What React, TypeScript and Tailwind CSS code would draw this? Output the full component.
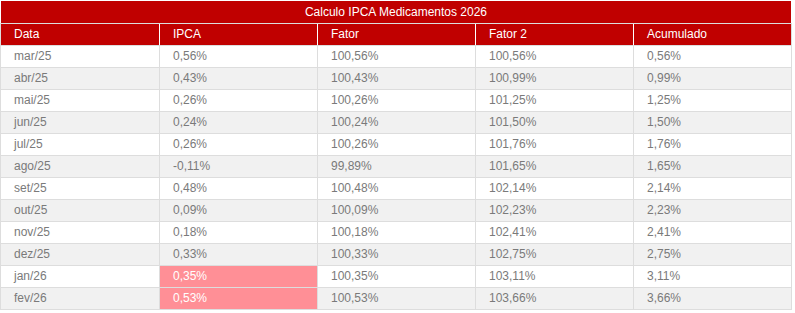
import React from 'react';

type Row = {
  data: string;
  ipca: string;
  fator: string;
  fator2: string;
  acumulado: string;
  highlight?: boolean;
};

const rows: Row[] = [
  { data: 'mar/25', ipca: '0,56%', fator: '100,56%', fator2: '100,56%', acumulado: '0,56%' },
  { data: 'abr/25', ipca: '0,43%', fator: '100,43%', fator2: '100,99%', acumulado: '0,99%' },
  { data: 'mai/25', ipca: '0,26%', fator: '100,26%', fator2: '101,25%', acumulado: '1,25%' },
  { data: 'jun/25', ipca: '0,24%', fator: '100,24%', fator2: '101,50%', acumulado: '1,50%' },
  { data: 'jul/25', ipca: '0,26%', fator: '100,26%', fator2: '101,76%', acumulado: '1,76%' },
  { data: 'ago/25', ipca: '-0,11%', fator: '99,89%', fator2: '101,65%', acumulado: '1,65%' },
  { data: 'set/25', ipca: '0,48%', fator: '100,48%', fator2: '102,14%', acumulado: '2,14%' },
  { data: 'out/25', ipca: '0,09%', fator: '100,09%', fator2: '102,23%', acumulado: '2,23%' },
  { data: 'nov/25', ipca: '0,18%', fator: '100,18%', fator2: '102,41%', acumulado: '2,41%' },
  { data: 'dez/25', ipca: '0,33%', fator: '100,33%', fator2: '102,75%', acumulado: '2,75%' },
  { data: 'jan/26', ipca: '0,35%', fator: '100,35%', fator2: '103,11%', acumulado: '3,11%', highlight: true },
  { data: 'fev/26', ipca: '0,53%', fator: '100,53%', fator2: '103,66%', acumulado: '3,66%', highlight: true },
];

const headers = ['Data', 'IPCA', 'Fator', 'Fator 2', 'Acumulado'];

const gridCols = 'grid grid-cols-[159px_158px_158px_158px_158px]';

export default function App() {
  return (
    <div className="min-h-screen bg-white pt-px font-['Liberation_Sans',Arial,sans-serif] text-[12px]">
      <div className="w-[792px]">
        {/* Title */}
        <div className="ml-px w-[790px] h-[22px] bg-[#c00000] text-white text-center leading-[22px]">
          Calculo IPCA Medicamentos 2026
        </div>

        {/* Header */}
        <div className={`${gridCols} border-t border-r border-[#dddddd] bg-[#c00000]`}>
          {headers.map((h, i) => (
            <div
              key={h}
              className={`h-[21px] leading-[21px] pl-[13px] text-white border-l ${
                i === 0 ? 'border-[#dddddd]' : 'border-white'
              }`}
            >
              {h}
            </div>
          ))}
        </div>

        {/* Body */}
        <div className="border-r border-b border-[#dddddd]">
          {rows.map((r, idx) => {
            const bg = idx % 2 === 0 ? 'bg-white' : 'bg-[#f1f1f1]';
            const cells = [r.data, r.ipca, r.fator, r.fator2, r.acumulado];
            return (
              <div key={r.data} className={`${gridCols} border-t border-[#dddddd] ${bg}`}>
                {cells.map((c, i) => {
                  const hl = r.highlight && i === 1;
                  return (
                    <div
                      key={i}
                      className={`h-[21px] leading-[21px] pl-[13px] border-l border-[#dddddd] ${
                        hl ? 'bg-[#ff8f96] text-white' : 'text-[#7a7a7a]'
                      }`}
                    >
                      {c}
                    </div>
                  );
                })}
              </div>
            );
          })}
        </div>
      </div>
    </div>
  );
}
